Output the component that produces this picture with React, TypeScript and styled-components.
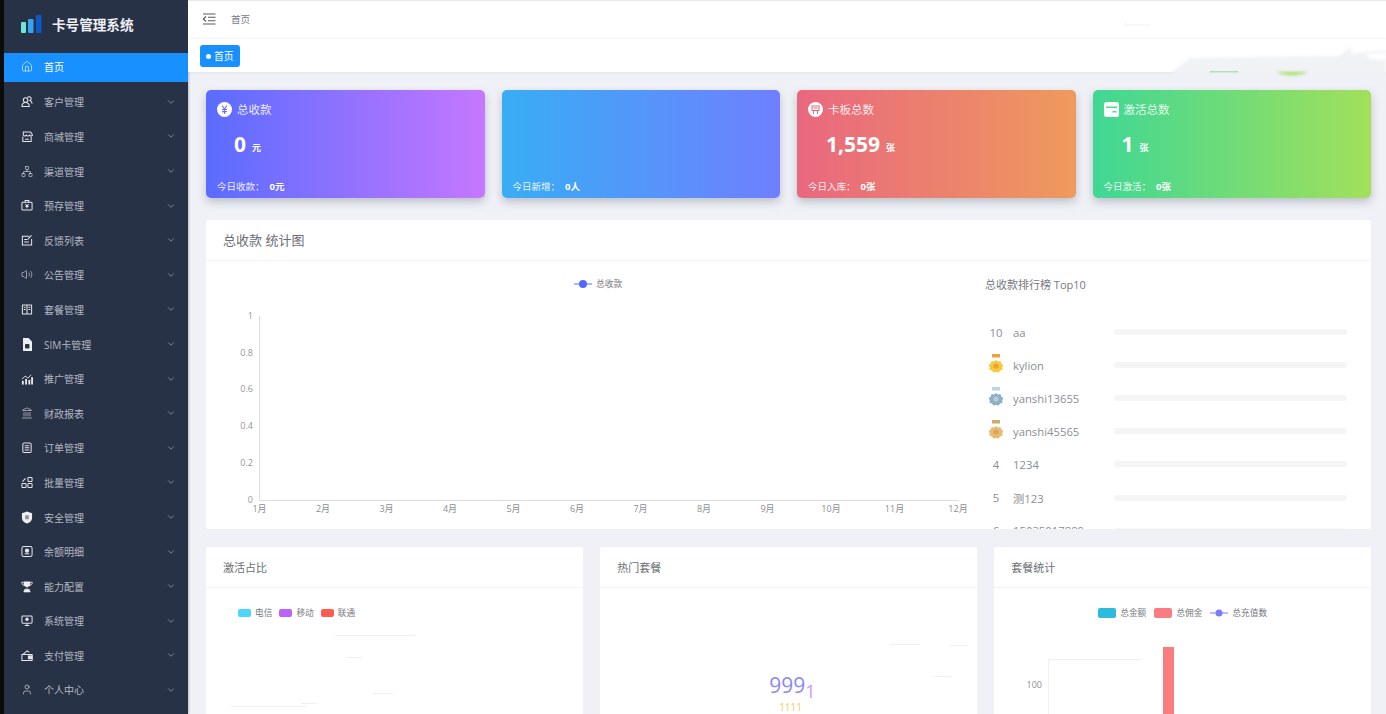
import React from "react"
import styled, { createGlobalStyle } from "styled-components"
import { ChevronDown, House, Landmark, Network, User, Volume2 } from "lucide-react"

const font = `"Open Sans", "Noto Sans CJK SC", sans-serif`

const GlobalStyle = createGlobalStyle`
  html, body {
    margin: 0;
    height: 100%;
    overflow: hidden;
    background: #eff1f6;
    font-family: ${font};
  }
  #root { height: 100%; }
  * { box-sizing: border-box; }
`

const Root = styled.div`
  position: relative;
`

const Page = styled.div`
  display: flex;
  height: 714px;
  overflow: hidden;
  border-left: 4px solid #0c0c0c;
`

const Sidebar = styled.aside`
  width: 184px;
  flex: none;
  background: #283246;
  color: #b4b9c3;
  box-shadow: 1px 0 2px rgba(0, 0, 0, 0.2);
`

const Brand = styled.div`
  height: 53px;
  display: flex;
  align-items: center;
  padding: 0 0 5px 17px;
  gap: 9px;
  color: #eef0f3;
  font-size: 13.6px;
  font-weight: 700;
`

const MenuItem = styled.div<{ $active?: boolean }>`
  height: ${(p) => (p.$active ? "28.6px" : "34.6px")};
  margin-bottom: ${(p) => (p.$active ? "3px" : "0")};
  display: flex;
  align-items: center;
  padding: ${(p) => (p.$active ? "0 12px 1px 17px" : "0 12px 0 17px")};
  font-size: 10px;
  background: ${(p) => (p.$active ? "#1890ff" : "transparent")};
  color: ${(p) => (p.$active ? "#fff" : "#b4b9c3")};
`

const MenuIcon = styled.span`
  width: 12px;
  height: 12px;
  margin-right: 11px;
  display: flex;
  align-items: center;
  justify-content: center;
  color: #e4e6ea;
`

const MenuLabel = styled.span`
  flex: 1;
`

const Main = styled.main`
  flex: 1;
  min-width: 0;
  display: flex;
  flex-direction: column;
  overflow: hidden;
`

const TopBar = styled.header`
  height: 38px;
  flex: none;
  background: #fff;
  border-top: 1px solid #e6e8ee;
  display: flex;
  align-items: center;
  padding: 0 0 1px 14px;
  gap: 15px;
  font-size: 9.5px;
  color: #77797e;
`

const TagBar = styled.div`
  height: 34px;
  flex: none;
  background: #fff;
  border-top: 1px solid #f6f6f7;
  display: flex;
  align-items: center;
  padding: 1px 0 0 12px;
  box-shadow: 0 1px 2px rgba(0, 0, 0, 0.06);
`

const Tag = styled.div`
  height: 22px;
  width: 40px;
  padding-left: 6px;
  display: flex;
  align-items: center;
  gap: 3px;
  background: #1890ff;
  border-radius: 3px;
  color: #fff;
  font-size: 9.8px;
  &::before {
    content: "";
    width: 5px;
    height: 5px;
    border-radius: 50%;
    background: #fff;
  }
`

const Content = styled.div`
  padding: 18px 15px 0 18px;
  display: flex;
  flex-direction: column;
  gap: 18px;
`

const Cards = styled.div`
  display: grid;
  grid-template-columns: repeat(4, 1fr);
  gap: 17px;
  margin-bottom: 4px;
`

const StatCard = styled.div<{ $from: string; $to: string }>`
  height: 108px;
  border-radius: 5px;
  padding: 11px 11px 0;
  color: #fff;
  display: flex;
  flex-direction: column;
  background: linear-gradient(90deg, ${(p) => p.$from}, ${(p) => p.$to});
  box-shadow: 0 4px 8px rgba(60, 70, 90, 0.28);
`

const CardHead = styled.div`
  height: 16px;
  display: flex;
  align-items: center;
  gap: 5px;
  font-size: 11.5px;
  color: rgba(255, 255, 255, 0.88);
`

const CardValue = styled.div<{ $indent: number }>`
  height: 28px;
  margin-top: 13px;
  padding-left: ${(p) => p.$indent}px;
  display: flex;
  align-items: center;
  gap: 6px;
  font-size: 21px;
  font-weight: 700;
  small {
    font-size: 9px;
    font-weight: 600;
    margin-top: 7px;
  }
`

const CardFoot = styled.div`
  margin-top: 21px;
  display: flex;
  gap: 5px;
  font-size: 9.5px;
  color: rgba(255, 255, 255, 0.9);
  b {
    font-weight: 700;
    color: #fff;
  }
`

const Panel = styled.section`
  background: #fff;
  border-radius: 2px;
  overflow: hidden;
`

const PanelTitle = styled.h3<{ $big?: boolean }>`
  margin: 0;
  height: 41px;
  display: flex;
  align-items: center;
  padding: ${(p) => (p.$big ? "0 0 2px 17px" : "0 0 0 17px")};
  font-size: ${(p) => (p.$big ? "13px" : "11px")};
  font-weight: 400;
  color: #6b6e73;
  border-bottom: 1px solid #f3f4f6;
`

const ChartPanel = styled(Panel)`
  height: 309px;
  flex: none;
`

const ChartBody = styled.div`
  height: 268px;
  display: flex;
  overflow: hidden;
`

const LineArea = styled.div`
  width: 770px;
  flex: none;
`

const Ranking = styled.div`
  flex: 1;
  padding: 15px 24px 0 9px;
`

const RankTitle = styled.div`
  font-size: 11px;
  color: #77797e;
  margin-bottom: 23.500px;
`

const RankRow = styled.div`
  height: 33.1px;
  display: flex;
  align-items: center;
  font-size: 11.3px;
  color: #8c8e92;
`

const RankNo = styled.span`
  width: 22px;
  display: flex;
  justify-content: center;
`

const RankName = styled.span`
  width: 107px;
  padding-left: 6px;
`

const RankBar = styled.span`
  flex: 1;
  height: 6px;
  border-radius: 3px;
  background: #f5f5f6;
`

const BottomRow = styled.div`
  display: grid;
  grid-template-columns: repeat(3, 1fr);
  gap: 17.5px;
`

const BottomPanel = styled(Panel)`
  height: 190px;
  position: relative;
`

const Legend = styled.div<{ $center?: boolean }>`
  display: flex;
  align-items: center;
  justify-content: ${(p) => (p.$center ? "center" : "flex-start")};
  padding: ${(p) => (p.$center ? "18px 0 0 0" : "18px 0 0 32px")};
  gap: ${(p) => (p.$center ? "8px" : "7px")};
  font-size: 8.7px;
  color: #77797e;
`

const LegendItem = styled.span`
  display: flex;
  align-items: center;
  gap: 4px;
`

const Swatch = styled.i<{ $color: string; $wide?: boolean }>`
  width: ${(p) => (p.$wide ? "18px" : "13px")};
  height: ${(p) => (p.$wide ? "10px" : "8px")};
  border-radius: 2px;
  background: ${(p) => p.$color};
`

const Donut = styled.div`
  padding: 87px 0 0 169px;
  line-height: 1;
  font-size: 21px;
  color: #8888fb;
  sub {
    font-size: 18px;
    color: #d892fb;
    vertical-align: -5px;
    line-height: 0;
  }
  small {
    display: block;
    width: 34px;
    margin: 6px 0 0 10px;
    font-size: 10px;
    color: #f8c75c;
  }
`

const Streak = styled.span<{ $x: number; $y: number; $w: number }>`
  position: absolute;
  left: ${(p) => p.$x}px;
  top: ${(p) => p.$y}px;
  width: ${(p) => p.$w}px;
  height: 1px;
  background: #efeff1;
`

const BarArea = styled.div`
  height: 110px;
`

const Glitch = styled.svg`
  position: absolute;
  top: 0;
  right: 0;
  pointer-events: none;
`

const GlitchPatch = styled.path`
  filter: blur(1.5px);
`

const LogoMark = () => (
  <svg width="22" height="18" viewBox="0 0 22 18">
    <rect x="0" y="7" width="5" height="11" rx="1" fill="#6fe6d8" />
    <rect x="7" y="4" width="5.5" height="14" rx="1" fill="#35a4f0" />
    <rect x="15" y="0" width="5.5" height="18" rx="1" fill="#0b58c8" />
  </svg>
)

// hand drawn menu glyphs, lucide has nothing close for most of these
const Glyph = ({ children }: { children: React.ReactNode }) => (
  <svg width="13" height="13" viewBox="0 0 13 13" fill="none" stroke="currentColor" strokeWidth="1.1">
    {children}
  </svg>
)

const CustomerIcon = () => (
  <Glyph>
    <circle cx="5" cy="5" r="2.500" />
    <path d="M1 12c0-3 1.500-4.500 4-4.500S9 9 9 12zM7 2.200c1-1.400 4-1 4 1.300 0 1-.5 1.700-1.200 2 1.500.7 2.200 2 2.200 3.500" />
  </Glyph>
)

const ShopIcon = () => (
  <Glyph>
    <path d="M2.500 1.500h8l2 3.500c-1 1.300-2.500 1.300-3 0-.8 1.300-3.200 1.300-4 0-.5 1.300-2 1.300-3 0z" />
    <path d="M2 6.500V12h9V6.500M4.500 9.500h4" />
  </Glyph>
)

const DepositIcon = () => (
  <Glyph>
    <rect x="1" y="3" width="11" height="8.500" rx="1" />
    <path d="M4.500 3V1.200h4V3M4.800 5l1.700 2 1.700-2M6.500 7v2.500M4.800 7.500h3.400" />
  </Glyph>
)

const FeedbackIcon = () => (
  <Glyph>
    <path d="M9 2H1.500v9.500H11.500V5M3.500 5.500h3M3.500 8h5M7 5.500L11.500 1" />
  </Glyph>
)

const PackageIcon = () => (
  <Glyph>
    <rect x="1.500" y="1.500" width="10" height="10" rx="0.500" />
    <path d="M6.500 1.500v10M3 4h2M3 6.500h2M8 4h2M8 6.500h2" />
  </Glyph>
)

const SimIcon = () => (
  <svg width="12" height="13" viewBox="0 0 12 13">
    <path d="M2 0h5.500L11 3.500V13H2z" fill="#eceef1" />
    <rect x="4" y="6" width="4.500" height="4.500" rx="1" fill="#283246" />
  </svg>
)

const PromoIcon = () => (
  <svg width="13" height="12" viewBox="0 0 13 12" fill="currentColor">
    <rect x="1" y="8" width="2" height="4" />
    <rect x="4.500" y="6" width="2" height="6" />
    <rect x="8" y="7" width="2" height="5" />
    <rect x="11" y="4" width="2" height="8" />
    <path d="M1 6l3.500-3 3 2L11 1.500" stroke="currentColor" fill="none" />
  </svg>
)

const OrderIcon = () => (
  <Glyph>
    <rect x="2" y="1.500" width="9" height="10.500" rx="1.500" />
    <path d="M4 4.500h5M4 6.800h5M4 9.200h5" />
  </Glyph>
)

const BatchIcon = () => (
  <Glyph>
    <rect x="1" y="7.500" width="4.500" height="4.500" rx="0.800" />
    <rect x="7.500" y="7.500" width="4.500" height="4.500" rx="0.800" />
    <rect x="7.500" y="1" width="4.500" height="4.500" rx="0.800" />
    <path d="M1.500 5.500L5 2" />
  </Glyph>
)

const ShieldIcon = () => (
  <svg width="13" height="13" viewBox="0 0 13 13">
    <path d="M6.500 0L12 2v5c0 3-2.500 5-5.500 6C3.500 12 1 10 1 7V2z" fill="#eceef1" />
    <rect x="4.500" y="4" width="4" height="4.500" rx="1" fill="#8b919e" />
  </svg>
)

const BalanceIcon = () => (
  <Glyph>
    <rect x="1" y="1" width="11" height="11" rx="2" />
    <circle cx="6.500" cy="5.500" r="1.800" fill="currentColor" />
    <path d="M4 9h5" />
  </Glyph>
)

const TrophyIcon = () => (
  <svg width="13" height="13" viewBox="0 0 13 13">
    <path d="M3 1h7v3c0 2-1.500 3-3.500 3S3 6 3 4z" fill="#eceef1" />
    <path d="M3 2H.8c0 2 1 3 2.700 3.500M10 2h2.200c0 2-1 3-2.700 3.500" stroke="#eceef1" fill="none" />
    <path d="M6.500 7v2M4 9.500h5l1 3H3z" fill="#eceef1" stroke="#eceef1" strokeWidth="0.600" />
  </svg>
)

const SystemIcon = () => (
  <Glyph>
    <rect x="1" y="1.500" width="11" height="8" rx="1" />
    <circle cx="6.500" cy="5.200" r="1.300" fill="currentColor" />
    <path d="M4 11.800h5M6.500 9.500v2.300" />
  </Glyph>
)

const PayIcon = () => (
  <Glyph>
    <path d="M1 5.500h11V12H1zM2 5.500L6.500 1.500 9 3" />
    <rect x="8" y="7" width="4" height="3" fill="currentColor" />
  </Glyph>
)

const ico = { size: 13, strokeWidth: 1.2 }

const menu: [string, React.ReactNode][] = [
  ["客户管理", <CustomerIcon />],
  ["商城管理", <ShopIcon />],
  ["渠道管理", <Network {...ico} />],
  ["预存管理", <DepositIcon />],
  ["反馈列表", <FeedbackIcon />],
  ["公告管理", <Volume2 {...ico} />],
  ["套餐管理", <PackageIcon />],
  ["SIM卡管理", <SimIcon />],
  ["推广管理", <PromoIcon />],
  ["财政报表", <Landmark size={14} strokeWidth={1.2} />],
  ["订单管理", <OrderIcon />],
  ["批量管理", <BatchIcon />],
  ["安全管理", <ShieldIcon />],
  ["余额明细", <BalanceIcon />],
  ["能力配置", <TrophyIcon />],
  ["系统管理", <SystemIcon />],
  ["支付管理", <PayIcon />],
  ["个人中心", <User size={15} strokeWidth={1.2} />],
]

const Medal = ({ band, body, core }: { band: string; body: string; core: string }) => (
  <svg width="18" height="22" viewBox="0 0 18 22">
    <rect x="5" y="0" width="8" height="3.500" fill={band} />
    <path d="M9 6l2 1.400 2.500-.3.800 2.300 2 1.600-1 2.200.2 2.500-2.400.8-1.400 2.100L9 18l-2.500.4-1.600-1.900-2.400-.8.200-2.500-1-2.200 2-1.600.8-2.300 2.500.3z" fill={body} />
    <circle cx="9" cy="12" r="2.600" fill={core} />
  </svg>
)

const YuanBadge = () => (
  <svg width="15" height="15" viewBox="0 0 15 15">
    <circle cx="7.500" cy="7.500" r="7.500" fill="#fff" />
    <path d="M5 3.500l2.500 3.500L10 3.500M7.500 7v5M5 7.500h5M5 9.700h5" stroke="#6d70ff" strokeWidth="1.200" fill="none" />
  </svg>
)

const CartBadge = () => (
  <svg width="15" height="15" viewBox="0 0 15 15">
    <circle cx="7.500" cy="7.500" r="7.500" fill="#fff" />
    <path d="M4 4h7v4.500H4zM5.500 8.500V12M9.500 8.500V12M5.500 6h4" stroke="#e96d7d" strokeWidth="1.100" fill="none" />
  </svg>
)

const CardBadge = () => (
  <svg width="15" height="15" viewBox="0 0 15 15">
    <rect width="15" height="15" rx="2.500" fill="#fff" />
    <rect x="2" y="4.500" width="11" height="1.500" fill="#52d98e" />
    <rect x="8.500" y="9" width="4" height="1.500" fill="#52d98e" />
  </svg>
)

const FoldIcon = () => (
  <svg width="14" height="12" viewBox="0 0 14 12" fill="none" stroke="#55585e" strokeWidth="1.100">
    <path d="M1 1h12.500M6 4.300h7.500M6 7.700h7.500M1 11h12.500M4 3.500L1.300 6 4 8.500" />
  </svg>
)

const months = ["1月", "2月", "3月", "4月", "5月", "6月", "7月", "8月", "9月", "10月", "11月", "12月"]
const ticks = ["1", "0.8", "0.6", "0.4", "0.2", "0"]

const LineChart = () => (
  <svg width="770" height="268" viewBox="0 0 770 268" fontFamily={font}>
    <line x1="368" x2="386" y1="23" y2="23" stroke="#5470fb" strokeWidth="1" />
    <circle cx="377" cy="23" r="4" fill="#4f6bff" />
    <text x="390" y="26" fontSize="8.700" fill="#77797e">总收款</text>
    {ticks.map((t, i) => (
      <text key={t} x="47" y={58 + i * 36.700} fontSize="9" fill="#94969a" textAnchor="end">{t}</text>
    ))}
    <path d="M53.500 55V239.500H753" stroke="#dcdde0" fill="none" />
    {months.map((m, i) => (
      <text key={m} x={53.500 + i * 63.500} y="251" fontSize="9" fill="#8c8e92" textAnchor="middle">{m}</text>
    ))}
  </svg>
)

const BarChart = () => (
  <svg width="376" height="124" viewBox="0 0 376 124" fontFamily={font}>
    <path d="M54.500 40V124M55 40.500H147M147 40v1M147 80v1" stroke="#efeff1" fill="none" />
    <text x="48" y="69" fontSize="9" fill="#8c8e92" textAnchor="end">100</text>
    <rect x="169" y="28" width="11" height="96" fill="#f87c80" />
  </svg>
)

const ranks: [React.ReactNode, string][] = [
  ["10", "aa"],
  [<Medal band="#eda03a" body="#f8c93e" core="#eea42c" />, "kylion"],
  [<Medal band="#bcd2e6" body="#8fb0c4" core="#b5cbd8" />, "yanshi13655"],
  [<Medal band="#d5a866" body="#e8bb74" core="#d9a55c" />, "yanshi45565"],
  ["4", "1234"],
  ["5", "测123"],
  ["6", "15035017889"],
]

const stats = [
  { from: "#5a6cff", to: "#c677ff", icon: <YuanBadge />, title: "总收款", value: "0", unit: "元", indent: 17, foot: "今日收款：", today: "0元" },
  { from: "#38adf4", to: "#6f7fff", icon: null, title: "", value: "", unit: "", indent: 0, foot: "今日新增：", today: "0人" },
  { from: "#e9677f", to: "#ee9a5d", icon: <CartBadge />, title: "卡板总数", value: "1,559", unit: "张", indent: 18, foot: "今日入库：", today: "0张" },
  { from: "#3fd794", to: "#a2e05b", icon: <CardBadge />, title: "激活总数", value: "1", unit: "张", indent: 18, foot: "今日激活：", today: "0张" },
]

export default function App() {
  return (
    <Root>
      <GlobalStyle />
      <Page>
        <Sidebar>
          <Brand>
            <LogoMark />
            卡号管理系统
          </Brand>
          <MenuItem $active>
            <MenuIcon><House size={13} strokeWidth={1.2} color="#fff" /></MenuIcon>
            <MenuLabel>首页</MenuLabel>
          </MenuItem>
          {menu.map(([label, icon]) => (
            <MenuItem key={label}>
              <MenuIcon>{icon}</MenuIcon>
              <MenuLabel>{label}</MenuLabel>
              <ChevronDown size={10} strokeWidth={2} color="#8f95a1" />
            </MenuItem>
          ))}
        </Sidebar>
        <Main>
          <TopBar>
            <FoldIcon />
            首页
          </TopBar>
          <TagBar>
            <Tag>首页</Tag>
          </TagBar>
          <Content>
            <Cards>
              {stats.map((s) => (
                <StatCard key={s.foot} $from={s.from} $to={s.to}>
                  <CardHead>
                    {s.icon}
                    {s.title}
                  </CardHead>
                  <CardValue $indent={s.indent}>
                    {s.value}
                    {s.unit && <small>{s.unit}</small>}
                  </CardValue>
                  <CardFoot>
                    {s.foot}
                    <b>{s.today}</b>
                  </CardFoot>
                </StatCard>
              ))}
            </Cards>
            <ChartPanel>
              <PanelTitle $big>总收款 统计图</PanelTitle>
              <ChartBody>
                <LineArea>
                  <LineChart />
                </LineArea>
                <Ranking>
                  <RankTitle>总收款排行榜 Top10</RankTitle>
                  {ranks.map(([no, name]) => (
                    <RankRow key={name}>
                      <RankNo>{no}</RankNo>
                      <RankName>{name}</RankName>
                      <RankBar />
                    </RankRow>
                  ))}
                </Ranking>
              </ChartBody>
            </ChartPanel>
            <BottomRow>
              <BottomPanel>
                <PanelTitle>激活占比</PanelTitle>
                <Legend>
                  <LegendItem><Swatch $color="#4cd5fd" />电信</LegendItem>
                  <LegendItem><Swatch $color="#bb62fb" />移动</LegendItem>
                  <LegendItem><Swatch $color="#ff5b51" />联通</LegendItem>
                </Legend>
                <Streak $x={129} $y={88} $w={80} />
                <Streak $x={140} $y={110} $w={16} />
                <Streak $x={167} $y={146} $w={20} />
                <Streak $x={25} $y={159} $w={75} />
                <Streak $x={95} $y={156} $w={15} />
              </BottomPanel>
              <BottomPanel>
                <PanelTitle>热门套餐</PanelTitle>
                <Donut>
                  999<sub>1</sub>
                  <small>1111</small>
                </Donut>
                <Streak $x={290} $y={97} $w={30} />
                <Streak $x={350} $y={98} $w={18} />
                <Streak $x={333} $y={129} $w={18} />
              </BottomPanel>
              <BottomPanel>
                <PanelTitle>套餐统计</PanelTitle>
                <Legend $center>
                  <LegendItem><Swatch $color="#2cbbdb" $wide />总金额</LegendItem>
                  <LegendItem><Swatch $color="#f87c80" $wide />总佣金</LegendItem>
                  <LegendItem>
                    <svg width="18" height="8" viewBox="0 0 18 8">
                      <line x1="0" x2="18" y1="4" y2="4" stroke="#7b7bfb" />
                      <circle cx="9" cy="4" r="3.500" fill="#7b7bfb" />
                    </svg>
                    总充值数
                  </LegendItem>
                </Legend>
                <BarArea>
                  <BarChart />
                </BarArea>
              </BottomPanel>
            </BottomRow>
          </Content>
        </Main>
      </Page>
      <Glitch width="262" height="78" viewBox="1124 0 262 78">
        <GlitchPatch d="M1170 74L1190 58L1340 56L1350 47L1352 54L1386 50V74z" fill="#f1f2f6" />
        <GlitchPatch d="M1366 54L1386 53V60L1370 59z" fill="#fff" />
        <rect x="1210" y="71" width="28" height="1.500" fill="#a6e6b6" />
        <GlitchPatch d="M1277 72h30c-5 4-25 4-30 0z" fill="#a2e05b" />
        <path d="M1125.500 22v4M1126 25h24" stroke="#f0f1f4" fill="none" />
      </Glitch>
    </Root>
  )
}
